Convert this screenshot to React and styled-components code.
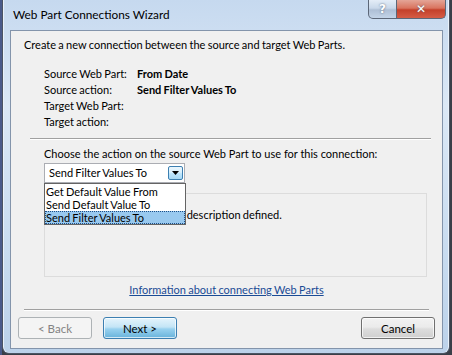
import styled, { createGlobalStyle } from "styled-components";

const GlobalStyle = createGlobalStyle`
  html, body {
    margin: 0;
    padding: 0;
    background: #3c4450;
  }
  body {
    font-family: Lato, "Noto Sans", sans-serif;
    font-size: 11px;
    word-spacing: -0.5px;
    color: #000;
  }
`;

const Desktop = styled.div`
  width: 452px;
  height: 355px;
  overflow: hidden;
  display: flex;
  background: linear-gradient(90deg, #4a5a8a 0, #4a5a8a 2px, #3a3f48 2px);
`;

const Window = styled.div`
  margin: 0 2px 1px 2px;
  width: 448px;
  height: 354px;
  box-sizing: border-box;
  border: 1px solid #4c5564;
  border-top: none;
  border-radius: 0 0 7px 7px;
  background: linear-gradient(180deg, #c6d9ef 0, #dbe8f6 30%, #c9dcf0 70%, #bcd2ea 100%);
  display: flex;
  flex-direction: column;
  padding: 0 6px 4px 7px;
  box-shadow: inset 1px 0 0 #e9f1fa, inset -1px 0 0 #e9f1fa;
`;

const TitleBar = styled.div`
  height: 30px;
  display: flex;
  align-items: flex-start;
  justify-content: space-between;
`;

const Title = styled.div`
  padding: 7px 0 0 3px;
  font-size: 11.8px;
  word-spacing: 0;
  line-height: 16px;
`;

const Caption = styled.div`
  display: flex;
  margin-right: -3px;
`;

const CaptionButton = styled.div`
  height: 19px;
  width: ${(p) => p.$w}px;
  box-sizing: border-box;
  border: 1px solid #5c6778;
  border-top: none;
  display: flex;
  align-items: center;
  justify-content: center;
  font-family: "DejaVu Sans", sans-serif;
  font-weight: bold;
  color: #fff;
  font-size: 12px;
  background: ${(p) =>
    p.$close
      ? "linear-gradient(180deg, #e4a597 0, #d9745f 45%, #c4402a 55%, #d55c45 100%)"
      : "linear-gradient(180deg, #e4edf7 0, #c9d8ea 45%, #aebfd5 55%, #c3d4e8 100%)"};
  border-radius: ${(p) => (p.$close ? "0 0 5px 0" : "0 0 0 5px")};
  border-left: ${(p) => (p.$close ? "none" : "1px solid #5c6778")};
  text-shadow: 0 0 2px #4a5a70;
`;

const Client = styled.div`
  flex: 1;
  background: #f0f0f0;
  border: 1px solid #8394ab;
  display: flex;
  flex-direction: column;
  padding: 6px 7px 0 7px;
  line-height: 16px;
  white-space: nowrap;
`;

const Intro = styled.div`
  padding-left: 6px;
`;

const InfoGrid = styled.div`
  margin: 13px 0 0 26px;
  display: grid;
  grid-template-columns: 93px auto;
  grid-auto-rows: 16px;
`;

const Value = styled.div`
  font-weight: bold;
`;

const Rule = styled.div`
  height: 1px;
  background: #a0a0a0;
  border-bottom: 1px solid #ffffff;
  margin: ${(p) => p.$m};
`;

const Section = styled.div`
  padding-left: 26px;
  display: flex;
  flex-direction: column;
`;

const Prompt = styled.div`
  margin-top: 6px;
  word-spacing: 0;
`;

const ComboWrap = styled.div`
  position: relative;
  margin-top: 1px;
  width: 141px;
`;

const Combo = styled.div`
  height: 20px;
  box-sizing: border-box;
  border: 1px solid #abadb3;
  background: #fff;
  display: flex;
  align-items: center;
  justify-content: space-between;
  padding: 0 1px 0 4px;
`;

const DropButton = styled.div`
  width: 15px;
  height: 14px;
  box-sizing: border-box;
  border: 1px solid #3c7fb1;
  border-radius: 2px;
  background: linear-gradient(180deg, #eaf6fd 0, #d9f0fc 45%, #bee6fd 55%, #a7d9f5 100%);
  display: flex;
  align-items: center;
  justify-content: center;
`;

const DropList = styled.div`
  position: absolute;
  top: 20px;
  left: 0;
  width: 142px;
  box-sizing: border-box;
  border: 1px solid #646464;
  background: #fff;
  z-index: 5;
  line-height: 13px;
  padding-top: 1px;
`;

const Option = styled.div`
  padding: 0 1px;
  height: 13px;
  background: ${(p) => (p.$selected ? "#99c9ef" : "transparent")};
  outline: ${(p) => (p.$selected ? "1px dotted #1c4f88" : "none")};
  outline-offset: -1px;
`;

const GroupBox = styled.div`
  margin-top: 10px;
  width: 383px;
  height: 84px;
  box-sizing: border-box;
  border: 1px solid #dcdcdc;
  padding: 13px 0 0 13px;
`;

const Link = styled.a`
  align-self: center;
  margin: 5px 0 0 0;
  color: #1a4b95;
  text-decoration: underline;
  cursor: pointer;
`;

const Footer = styled.div`
  display: flex;
  justify-content: space-between;
  margin-top: 6px;
`;

const ButtonGroup = styled.div`
  display: flex;
  gap: 11px;
`;

const Button = styled.button`
  width: 74px;
  height: 22px;
  box-sizing: border-box;
  font-family: inherit;
  font-size: 11.5px;
  padding: 0;
  border-radius: 3px;
  border: 1px solid ${(p) => (p.$disabled ? "#adb2b5" : p.$default ? "#3c7fb1" : "#707070")};
  color: ${(p) => (p.$disabled ? "#838383" : "#000")};
  background: ${(p) =>
    p.$disabled
      ? "#f4f4f4"
      : p.$default
      ? "linear-gradient(180deg, #e5f4fc 0, #c4e5f6 45%, #98d1ef 55%, #68b3db 100%)"
      : "linear-gradient(180deg, #f2f2f2 0, #ebebeb 45%, #dddddd 55%, #cfcfcf 100%)"};
  box-shadow: ${(p) => (p.$disabled ? "none" : "inset 0 0 0 1px rgba(255,255,255,0.7)")};
`;

const App = () => {
  return (
    <>
      <GlobalStyle />
      <Desktop>
        <Window>
          <TitleBar>
            <Title>Web Part Connections Wizard</Title>
            <Caption>
              <CaptionButton $w={29}>?</CaptionButton>
              <CaptionButton $w={49} $close>
                ✕
              </CaptionButton>
            </Caption>
          </TitleBar>
          <Client>
            <Intro>Create a new connection between the source and target Web Parts.</Intro>
            <InfoGrid>
              <div>Source Web Part:</div>
              <Value>From Date</Value>
              <div>Source action:</div>
              <Value>Send Filter Values To</Value>
              <div>Target Web Part:</div>
              <div />
              <div>Target action:</div>
              <div />
            </InfoGrid>
            <Rule $m="8px 4px 0 12px" />
            <Section>
              <Prompt>Choose the action on the source Web Part to use for this connection:</Prompt>
              <ComboWrap>
                <Combo>
                  <span>Send Filter Values To</span>
                  <DropButton>
                    <svg width="7" height="4" viewBox="0 0 7 4">
                      <path d="M0 0 H7 L3.5 4 Z" fill="#000" />
                    </svg>
                  </DropButton>
                </Combo>
                <DropList>
                  <Option>Get Default Value From</Option>
                  <Option>Send Default Value To</Option>
                  <Option $selected>Send Filter Values To</Option>
                </DropList>
              </ComboWrap>
              <GroupBox>The selected action has no description defined.</GroupBox>
            </Section>
            <Link>Information about connecting Web Parts</Link>
            <Rule $m="11px 6px 0 6px" />
            <Footer>
              <ButtonGroup>
                <Button $disabled>&lt; Back</Button>
                <Button $default>Next &gt;</Button>
              </ButtonGroup>
              <Button>Cancel</Button>
            </Footer>
          </Client>
        </Window>
      </Desktop>
    </>
  );
};

export default App;
